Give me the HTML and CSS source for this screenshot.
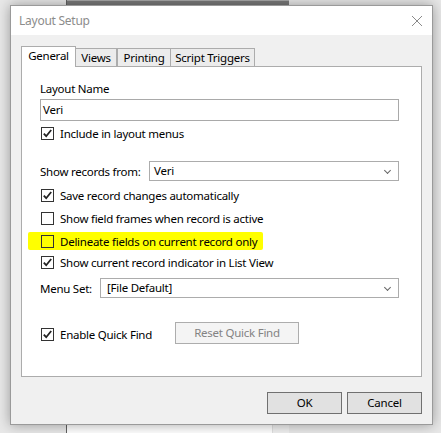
FILE: index.html
```html
<!DOCTYPE html>
<html lang="en">
<head>
  <meta charset="UTF-8">
  <title>Layout Setup</title>
  <link rel="stylesheet" href="styles.css">
</head>
<body>

  <!-- layout window behind the dialog -->
  <div class="backwin">
    <div class="backwin-top"></div>
    <div class="backwin-body">
      <div class="backwin-page"></div>
      <div class="backwin-scroll"></div>
    </div>
  </div>

  <div class="dialog">
    <div class="titlebar">
      <span class="title">Layout Setup</span>
      <svg class="close" width="12" height="12" viewBox="0 0 12 12">
        <path d="M1 1 L11 11 M11 1 L1 11" stroke="#8a8a8a" stroke-width="1" fill="none"/>
      </svg>
    </div>

    <div class="dlg-body">
      <div class="tabs">
        <div class="tab active">General</div>
        <div class="tab views">Views</div>
        <div class="tab printing">Printing</div>
        <div class="tab triggers">Script Triggers</div>
      </div>

      <div class="panel">
        <div class="label">Layout Name</div>
        <div class="textbox">Veri</div>

        <label class="check first">
          <span class="box checked"></span>Include in layout menus
        </label>

        <div class="field-row records">
          <span class="field-label">Show records from:</span>
          <div class="select records-select">Veri<span class="chev"></span></div>
        </div>

        <label class="check">
          <span class="box checked"></span>Save record changes automatically
        </label>
        <label class="check">
          <span class="box"></span>Show field frames when record is active
        </label>
        <label class="check marked">
          <span class="box"></span>Delineate fields on current record only
        </label>
        <label class="check tight">
          <span class="box checked"></span>Show current record indicator in List View
        </label>

        <div class="field-row menuset">
          <span class="field-label">Menu Set:</span>
          <div class="select menu-select">[File Default]<span class="chev"></span></div>
        </div>

        <div class="quickfind">
          <label class="check qf-check">
            <span class="box checked"></span>Enable Quick Find
          </label>
          <div class="btn disabled">Reset Quick Find</div>
        </div>
      </div>

      <div class="buttons">
        <div class="btn">OK</div>
        <div class="btn">Cancel</div>
      </div>
    </div>
  </div>

</body>
</html>
```

FILE: styles.css
```css
body {
  margin: 0;
  width: 441px;
  height: 433px;
  overflow: hidden;
  background: #e8e8e8;
  font-family: "Noto Sans", "Segoe UI", sans-serif;
  font-size: 11.5px;
  letter-spacing: -0.25px;
  color: #000;
  position: relative;
}

/* window sitting behind the dialog */
.backwin {
  position: absolute;
  left: 66px;
  top: 0;
  width: 222px;
  height: 433px;
  border-left: 1px solid #606060;
  background: #fff;
}
.backwin-top {
  height: 5px;
  background: #7a7a7a;
  border-top: 1px solid #a8a8a8;
  box-sizing: border-box;
}
.backwin-body {
  display: flex;
  height: 428px;
}
.backwin-page {
  flex: 1;
  background: #fff;
}
.backwin-scroll {
  width: 16px;
  background: #f0f0f0;
  border-left: 1px solid #e0e0e0;
}

/* dialog */
.dialog {
  position: absolute;
  left: 10px;
  top: 5px;
  width: 423px;
  height: 420px;
  box-sizing: border-box;
  border: 1px solid #9a9a9a;
  background: #f0f0f0;
  box-shadow: 0 0 12px rgba(0, 0, 0, 0.35);
  display: flex;
  flex-direction: column;
}
.titlebar {
  height: 29px;
  background: #fff;
  display: flex;
  align-items: center;
  justify-content: space-between;
  padding: 0 9px 0 8px;
}
.title {
  color: #8c8c8c;
  font-size: 12px;
}
.close {
  margin-top: 1px;
}

.dlg-body {
  padding: 11px 10px 0 10px;
}

.tabs {
  display: flex;
  align-items: flex-end;
  height: 20px;
}
.tab {
  height: 18px;
  box-sizing: border-box;
  border: 1px solid #acacac;
  border-bottom: none;
  background: #ececec;
  text-align: center;
  line-height: 17px;
}
.tab.active {
  width: 55px;
  height: 21px;
  line-height: 18px;
  background: #fff;
  position: relative;
  z-index: 1;
  margin-bottom: -1px;
}
.tab.views {
  width: 41px;
  border-left: none;
}
.tab.printing {
  width: 54px;
  border-left: 1px solid #acacac;
}
.tab.triggers {
  width: 84px;
  border-left: none;
}

.panel {
  width: 401px;
  height: 311px;
  box-sizing: border-box;
  border: 1px solid #acacac;
  background: #fff;
  padding: 13px 22px 0 18px;
}

.label {
  height: 17px;
  line-height: 17px;
}
.textbox {
  margin-top: 2px;
  height: 22px;
  box-sizing: border-box;
  border: 1px solid #a9a9a9;
  padding-left: 2px;
  line-height: 20px;
}

.check {
  display: flex;
  align-items: center;
  height: 18px;
  margin-top: 5px;
  margin-left: 1px;
}
.check.first {
  margin-top: 3px;
}
.check.tight {
  margin-top: 3px;
}
.check.marked {
  width: fit-content;
  margin-left: -12px;
  padding: 0 6px 0 13px;
  background: #ffff00;
  border-radius: 2px;
}
.box {
  width: 13px;
  height: 13px;
  box-sizing: border-box;
  border: 1px solid #333;
  background: #fff;
  margin-right: 6px;
  flex: none;
}
.marked .box {
  background: transparent;
}
.box.checked {
  background: #fff url("data:image/svg+xml;utf8,<svg xmlns='http://www.w3.org/2000/svg' width='11' height='11' viewBox='0 0 11 11'><path d='M1.8 5.6 L4.2 8.2 L9.2 2' stroke='%23222' stroke-width='1.8' fill='none'/></svg>") no-repeat center;
}

.field-row {
  display: flex;
  align-items: center;
  height: 20px;
}
.records {
  margin-top: 19px;
}
.menuset {
  margin-top: 7px;
}
.field-label {
  flex: none;
}
.select {
  height: 20px;
  box-sizing: border-box;
  border: 1px solid #acacac;
  background: #fff;
  line-height: 18px;
  padding-left: 4px;
  position: relative;
}
.records-select {
  margin-left: auto;
  width: 250px;
}
.menu-select {
  margin-left: auto;
  width: 299px;
  padding-left: 6px;
}
.chev {
  position: absolute;
  right: 8px;
  top: 6px;
  width: 4px;
  height: 4px;
  border-right: 1px solid #666;
  border-bottom: 1px solid #666;
  transform: rotate(45deg);
}

.quickfind {
  display: flex;
  align-items: flex-start;
  margin-top: 24px;
}
.qf-check {
  margin-top: 3px;
  width: 134px;
}

.btn {
  height: 22px;
  box-sizing: border-box;
  border: 1px solid #707070;
  background: #e1e1e1;
  text-align: center;
  line-height: 20px;
}
.btn.disabled {
  width: 124px;
  border-color: #adadad;
  background: #f4f4f4;
  color: #838383;
}

.buttons {
  display: flex;
  justify-content: flex-end;
  gap: 5px;
  width: 401px;
  margin-top: 15px;
}
.buttons .btn {
  width: 75px;
}
```
